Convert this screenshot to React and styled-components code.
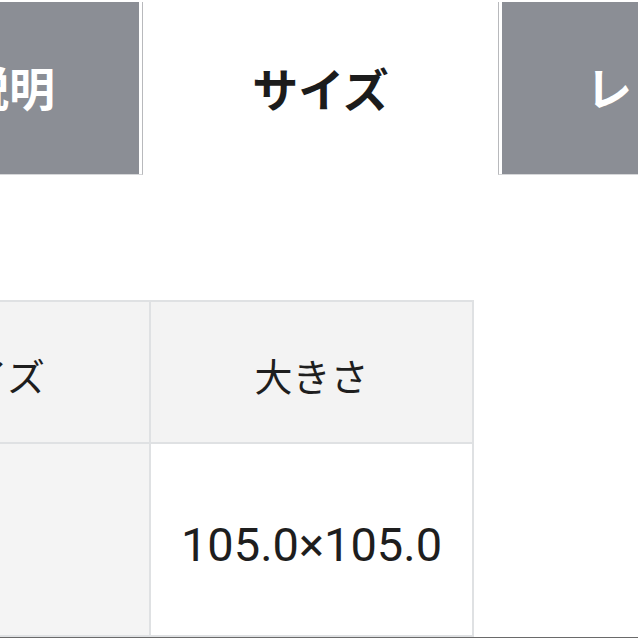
import React from 'react'
import styled, { createGlobalStyle } from 'styled-components'

const GlobalStyle = createGlobalStyle`
  html, body {
    margin: 0;
    padding: 0;
    background: #ffffff;
    overflow: hidden;
  }
  #root {
    width: 638px;
    height: 638px;
    overflow: hidden;
    font-family: Roboto, 'Noto Sans CJK JP', sans-serif;
  }
`

const tabs = [
  { label: '商品説明', side: 'left' },
  { label: 'サイズ', active: true },
  { label: 'レビュー', side: 'right' },
]

export default function App() {
  return (
    <>
      <GlobalStyle />
      <Page>
        <TabBar>
          {tabs.map(t => (
            <Tab key={t.label} $active={t.active} $side={t.side}>
              {t.label}
            </Tab>
          ))}
        </TabBar>
        <SizeTable>
          <tbody>
            <tr>
              <HeadCell>サイズ</HeadCell>
              <HeadCell>大きさ</HeadCell>
            </tr>
            <tr>
              <LabelCell />
              <ValueCell>105.0×105.0</ValueCell>
            </tr>
          </tbody>
        </SizeTable>
        <BottomEdge />
      </Page>
    </>
  )
}

const Page = styled.div`
  display: flex;
  flex-direction: column;
  width: 638px;
  height: 638px;
`

const TabBar = styled.div`
  display: flex;
  margin-left: -216px;
  padding-top: 2px;
  height: 173px;
  flex-shrink: 0;
`

const Tab = styled.div`
  box-sizing: border-box;
  flex-shrink: 0;
  width: ${p => (p.$active ? '355px' : '359px')};
  display: flex;
  align-items: center;
  justify-content: center;
  font-family: 'Noto Sans CJK JP', sans-serif;
  font-size: 46px;
  font-weight: 700;
  padding-bottom: 4px;
  color: ${p => (p.$active ? '#1c1c1c' : '#ffffff')};
  background: ${p => (p.$active ? '#ffffff' : '#8b8e95')};
  border-bottom: ${p => (p.$active ? 'none' : '1px solid #d6d7d9')};
  border-right: ${p => (p.$side === 'left' ? '1px solid #b8b9bc' : 'none')};
  border-left: ${p => (p.$side === 'right' ? '1px solid #b8b9bc' : 'none')};
  box-shadow: ${p =>
    p.$side === 'left'
      ? 'inset -3px 0 0 #ffffff'
      : p.$side === 'right'
      ? 'inset 3px 0 0 #ffffff'
      : 'none'};
`

const SizeTable = styled.table`
  border-collapse: collapse;
  table-layout: fixed;
  width: 648px;
  margin-left: -174px;
  margin-top: 125px;
  flex-shrink: 0;
  td {
    border: 2px solid #dfe1e3;
    text-align: center;
    color: #1e1e1e;
    padding: 0;
  }
`

const HeadCell = styled.td`
  height: 136px;
  background: #f3f3f3;
  font-family: 'Noto Sans CJK JP', sans-serif;
  font-size: 38px;
  font-weight: 400;
  padding-top: 4px !important;
`

const LabelCell = styled.td`
  height: 191px;
  background: #f4f4f4;
`

const ValueCell = styled.td`
  background: #ffffff;
  font-family: Roboto, sans-serif;
  font-size: 47px;
  padding-top: 10px !important;
`

const BottomEdge = styled.div`
  height: 2px;
  background: #6a6a6a;
  flex-shrink: 0;
`
